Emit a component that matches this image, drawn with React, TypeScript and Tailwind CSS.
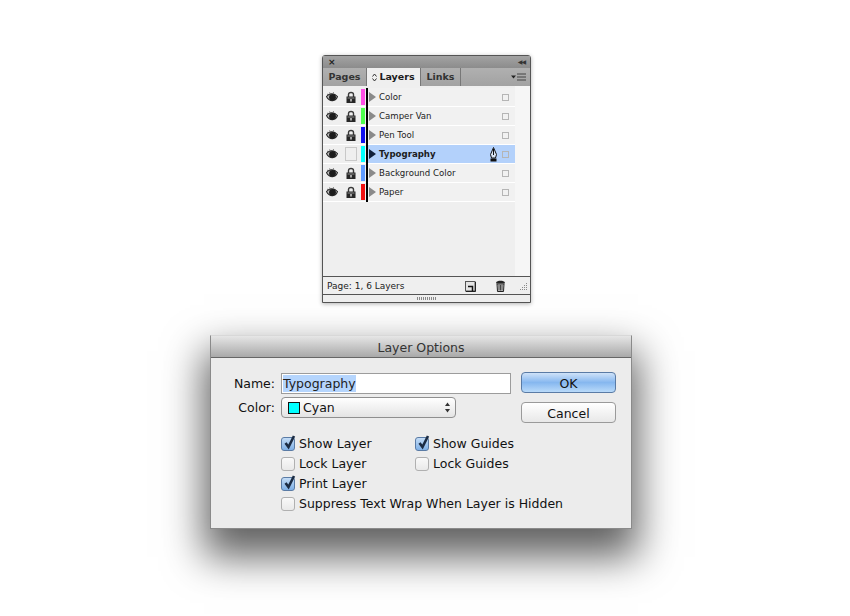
import React from "react";

const FONT = "font-['DejaVu_Sans','Liberation_Sans',sans-serif]";

const layers = [
  { name: "Color", color: "bg-[#ff4fe6]", locked: true },
  { name: "Camper Van", color: "bg-[#4fff4f]", locked: true },
  { name: "Pen Tool", color: "bg-[#1010ee]", locked: true },
  { name: "Typography", color: "bg-[#00ffff]", locked: false, active: true },
  { name: "Background Color", color: "bg-[#5f9bff]", locked: true },
  { name: "Paper", color: "bg-[#f01010]", locked: true },
];

function Eye() {
  return (
    <svg width="12" height="11" viewBox="0 0 12 11">
      <path d="M0.5 4.5C3 1 8 0.5 11.5 4.5C10 9.5 3.5 10.5 0.5 4.5Z" fill="#bdbdbd" stroke="#2a2a2a" strokeWidth="1.1" />
      <ellipse cx="6.5" cy="5.2" rx="3.4" ry="3.3" fill="#1c1c1c" />
      <path d="M1 2L2.6 3M3.6 0.4L4.4 2M7.5 0.2L7.2 1.8" stroke="#555" strokeWidth="0.8" />
    </svg>
  );
}

function Lock() {
  return (
    <svg width="10" height="12" viewBox="0 0 10 12">
      <path d="M2.5 6V3.4C2.5 0.8 7.5 0.8 7.5 3.4V6" fill="none" stroke="#3a3a3a" strokeWidth="1.4" />
      <rect x="0.5" y="5.5" width="9" height="6.5" fill="#262626" />
      <rect x="1.5" y="6.5" width="7" height="1" fill="#8a8a8a" />
      <rect x="4" y="8" width="2" height="2.5" fill="#a5a5a5" />
    </svg>
  );
}

function PenTool() {
  return (
    <svg width="9" height="15" viewBox="0 0 9 15">
      <path d="M4.5 0.5L7.5 7.5L6.5 11H2.5L1.5 7.5Z" fill="#d8e4f4" stroke="#111" strokeWidth="1" />
      <path d="M4.5 2V8" stroke="#111" strokeWidth="1" />
      <rect x="1.5" y="11.5" width="6" height="3" fill="#111" />
    </svg>
  );
}

function NewLayer() {
  return (
    <svg width="11" height="11" viewBox="0 0 11 11">
      <rect x="0.5" y="0.5" width="9.5" height="9.5" fill="#e4e4e4" stroke="#555" />
      <path d="M3 5.5H7.5V10" fill="none" stroke="#111" strokeWidth="1.5" />
      <path d="M1 10.5H10.5V1" fill="none" stroke="#222" strokeWidth="1" />
    </svg>
  );
}

function Trash() {
  return (
    <svg width="11" height="12" viewBox="0 0 11 12">
      <path d="M1 2.5C2 0.2 9 0.2 10 2.5V3.5H1Z" fill="#222" />
      <path d="M2 4H9L8.5 11.5H2.5Z" fill="#cfcfcf" stroke="#222" />
      <path d="M4 5V10.5M5.5 5V10.5M7 5V10.5" stroke="#222" strokeWidth="0.8" />
    </svg>
  );
}

function Grip() {
  return (
    <svg width="9" height="9" viewBox="0 0 9 9" fill="#8a8a8a">
      <rect x="7" y="1" width="1" height="1" />
      <rect x="5" y="3" width="1" height="1" />
      <rect x="7" y="3" width="1" height="1" />
      <rect x="3" y="5" width="1" height="1" />
      <rect x="5" y="5" width="1" height="1" />
      <rect x="7" y="5" width="1" height="1" />
      <rect x="1" y="7" width="1" height="1" />
      <rect x="3" y="7" width="1" height="1" />
      <rect x="5" y="7" width="1" height="1" />
      <rect x="7" y="7" width="1" height="1" />
    </svg>
  );
}

function LayerRow({ layer }: { layer: (typeof layers)[number] }) {
  return (
    <div className="flex h-[19px]">
      <div className="flex w-[43px] shrink-0 border-b border-white bg-[#efefef]">
        <div className="flex w-[18px] items-center justify-center">
          <Eye />
        </div>
        <div className="ml-[1px] flex w-[18px] items-center justify-center">
          {layer.locked ? (
            <Lock />
          ) : (
            <div className="h-[14px] w-[12px] border border-[#c8c8c8]" />
          )}
        </div>
        <div className="flex flex-1 py-[1px] pl-[1px]">
          <div className={`w-[4px] ${layer.color}`} />
        </div>
      </div>
      <div className="w-[2px] shrink-0 bg-black" />
      <div className={`flex flex-1 items-center border-b border-white ${layer.active ? "bg-[#b3d1fb]" : "bg-[#f1f1f1]"}`}>
        <div
          className={`ml-[1px] h-0 w-0 border-y-[5px] border-l-[7px] border-y-transparent ${
            layer.active ? "border-l-[#10203a]" : "border-l-[#8a8a8a]"
          }`}
        />
        <span className={`ml-[3px] text-[8.6px] leading-none text-[#1c1c1c] ${layer.active ? "font-bold" : ""}`}>
          {layer.name}
        </span>
        <div className="ml-auto flex items-center">
          {layer.active && (
            <div className="mr-[4px]">
              <PenTool />
            </div>
          )}
          <div className="mr-[6px] h-[7px] w-[7px] border border-[#b5b5b5]" />
        </div>
      </div>
    </div>
  );
}

function Panel() {
  return (
    <div className="ml-[322px] w-[209px] rounded-t-[3px] border border-[#555] bg-[#efefef] shadow-[0_1px_4px_rgba(0,0,0,0.3)]">
      <div className="flex h-[12px] items-center justify-between bg-gradient-to-b from-[#a3a3a3] to-[#8c8c8c] px-[5px]">
        <span className="text-[9px] font-bold leading-none text-[#222]">×</span>
        <span className="text-[6px] leading-none tracking-[-1px] text-[#333]">◀◀</span>
      </div>
      <div className="flex h-[18px] items-stretch bg-gradient-to-b from-[#b0b0b0] to-[#a2a2a2] text-[9.5px] font-bold text-[#333]">
        <div className="flex w-[44px] items-center justify-center border-r border-[#777]">Pages</div>
        <div className="flex w-[53px] items-center justify-center gap-[2px] bg-[#efefef] text-[#1c1c1c]">
          <svg width="5" height="9" viewBox="0 0 5 9" fill="none" stroke="#333" strokeWidth="1">
            <path d="M0.5 3.5L2.5 1L4.5 3.5M0.5 5.5L2.5 8L4.5 5.5" />
          </svg>
          Layers
        </div>
        <div className="flex w-[41px] items-center justify-center border-x border-[#777]">Links</div>
        <div className="ml-auto flex items-center pr-[4px]">
          <svg width="15" height="8" viewBox="0 0 15 8">
            <path d="M0 2.5H5L2.5 5.5Z" fill="#222" />
            <path d="M6 1H15M6 4H15M6 7H15" stroke="#444" strokeWidth="1" />
          </svg>
        </div>
      </div>
      <div className="flex h-[191px] border-b border-[#555]">
        <div className="flex-1 pt-[2px]">
          {layers.map((layer) => (
            <LayerRow key={layer.name} layer={layer} />
          ))}
        </div>
        <div className="w-[15px] shrink-0 bg-[#f6f6f6]" />
      </div>
      <div className="flex h-[18px] items-center border-b border-[#555] pl-[4px] pr-[2px] pt-[1px] text-[9px] text-[#222]">
        <span className="pt-[1px]">Page: 1, 6 Layers</span>
        <div className="ml-auto flex items-center">
          <NewLayer />
          <div className="ml-[19px]">
            <Trash />
          </div>
          <div className="ml-[13px]">
            <Grip />
          </div>
        </div>
      </div>
      <div className="flex h-[7px] items-center justify-center">
        <div className="h-[3px] w-[20px] bg-[repeating-linear-gradient(90deg,#888_0,#888_1px,transparent_1px,transparent_2px)]" />
      </div>
    </div>
  );
}

function CheckBox({ checked }: { checked?: boolean }) {
  return (
    <div
      className={`relative h-[14px] w-[14px] shrink-0 rounded-[3px] border ${
        checked
          ? "border-[#5a7ba5] bg-gradient-to-b from-[#c3dcf6] to-[#7fb0e6]"
          : "border-[#b0b0b0] bg-gradient-to-b from-[#f9f9f9] to-[#e9e9e9]"
      }`}
    >
      {checked && (
        <svg className="absolute left-[1px] top-[-4px]" width="13" height="16" viewBox="0 0 13 16">
          <path d="M2.5 9L5.5 13L11 2" fill="none" stroke="#1b2c44" strokeWidth="2.6" />
        </svg>
      )}
    </div>
  );
}

function Check({ label, checked }: { label: string; checked?: boolean }) {
  return (
    <div className="flex h-[20px] items-center gap-[4px] whitespace-nowrap">
      <CheckBox checked={checked} />
      <span>{label}</span>
    </div>
  );
}

function Dialog() {
  return (
    <div className="ml-[210px] mt-[32px] w-[422px] border border-[#8a8a8a] border-t-[#d8d8d8] bg-[#ececec] text-[12.5px] text-[#111] shadow-[0_22px_38px_6px_rgba(0,0,0,0.62)]">
      <div className="flex h-[22px] items-center justify-center border-b border-[#666] bg-gradient-to-b from-[#e6e6e6] to-[#a9a9a9] pt-[3px] text-[#333]">
        Layer Options
      </div>
      <div className="h-[170px] pl-[22px] pr-[15px] pt-[14px]">
        <div className="flex">
          <div className="w-[278px]">
            <div className="flex h-[22px] items-center">
              <span className="w-[42px] pt-[2px] text-right">Name:</span>
              <div className="ml-[6px] flex h-[21px] w-[230px] items-center border border-[#9c9c9c] bg-white pl-[1px] pt-[1px]">
                <span className="bg-[#b5d5fd] pt-[1px] leading-[16px] text-[#222]">Typography</span>
              </div>
            </div>
            <div className="mt-[3px] flex h-[21px] items-center">
              <span className="w-[42px] pt-[1px] text-right">Color:</span>
              <div className="ml-[6px] flex h-[21px] w-[175px] items-center rounded-[4px] border border-[#8f8f8f] bg-gradient-to-b from-white to-[#e4e4e4] pl-[6px] pr-[4px]">
                <div className="h-[12px] w-[12px] border border-[#111] bg-[#00ffff]" />
                <span className="ml-[3px] pt-[1px]">Cyan</span>
                <svg className="ml-auto" width="7" height="11" viewBox="0 0 7 11" fill="#333">
                  <path d="M3.5 0.5L6 4H1Z" />
                  <path d="M3.5 10.5L6 7H1Z" />
                </svg>
              </div>
            </div>
          </div>
          <div className="ml-[10px] flex flex-col gap-[9px]">
            <div className="flex h-[21px] w-[95px] items-center justify-center rounded-[4px] border border-[#5a7ba5] bg-gradient-to-b from-[#cfe2f8] via-[#86b7ef] to-[#b9daf9] pt-[3px]">
              OK
            </div>
            <div className="flex h-[21px] w-[95px] items-center justify-center rounded-[4px] border border-[#9a9a9a] bg-gradient-to-b from-white to-[#e8e8e8] pt-[3px]">
              Cancel
            </div>
          </div>
        </div>
        <div className="ml-[48px] mt-[11px] flex">
          <div className="w-[134px]">
            <Check label="Show Layer" checked />
            <Check label="Lock Layer" />
            <Check label="Print Layer" checked />
            <Check label="Suppress Text Wrap When Layer is Hidden" />
          </div>
          <div>
            <Check label="Show Guides" checked />
            <Check label="Lock Guides" />
          </div>
        </div>
      </div>
    </div>
  );
}

export default function App() {
  return (
    <div className={`h-[616px] w-[850px] overflow-hidden bg-white pt-[55px] ${FONT}`}>
      <Panel />
      <Dialog />
    </div>
  );
}
